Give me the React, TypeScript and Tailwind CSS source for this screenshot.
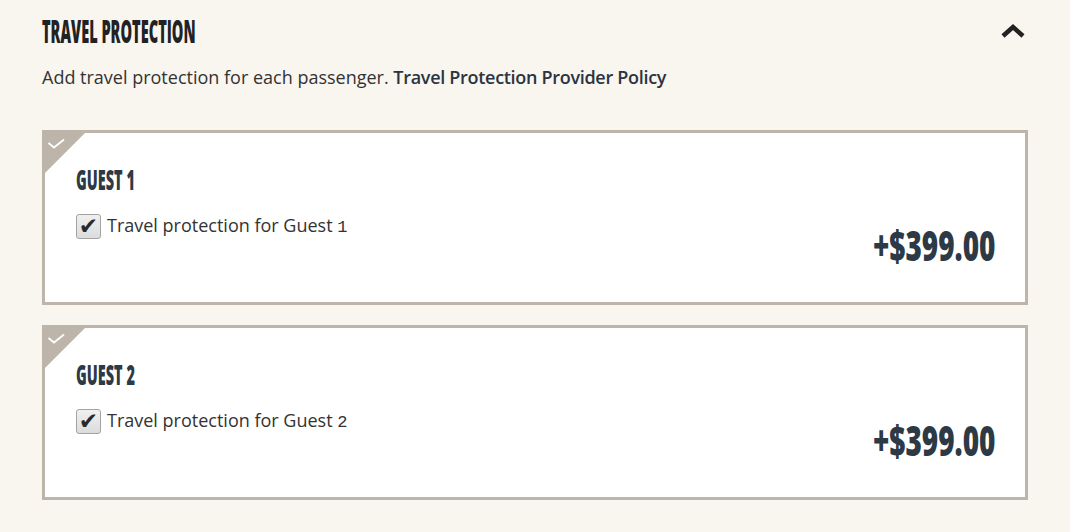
const guests = [
  { id: 1, price: "+$399.00" },
  { id: 2, price: "+$399.00" },
];

const condensed = "font-['Open_Sans',sans-serif] font-extrabold";

function GuestCard({ id, price }: { id: number; price: string }) {
  return (
    <div className="relative h-[175px] border-[3px] border-[#bdb5aa] bg-white">
      {/* corner flag */}
      <svg viewBox="0 0 40 40" className="absolute left-0 top-0 h-[40px] w-[40px]" aria-hidden>
        <path d="M0 0 H40 L0 40 Z" fill="#bdb5aa" />
        <path d="M3.5 10 L9 14.5 L19 6.5" fill="none" stroke="#fff" strokeWidth="1.8" />
      </svg>
      <div className="flex h-full items-start justify-between pl-[31px] pr-[30px] pt-[31px]">
        <div>
          <h3 className={`${condensed} origin-left scale-x-[0.5] text-[29px] leading-none text-[#2d3a46]`}>
            GUEST {id}
          </h3>
          <label className="mt-[19px] flex items-center gap-[6px] text-[18px] text-[#333]">
            <span className="flex h-[25px] w-[25px] items-center justify-center overflow-hidden rounded-[3px] border border-[#a3a3a3] bg-gradient-to-b from-[#f0f0f0] to-[#dcdcdc]">
              <span className="font-['DejaVu_Sans',sans-serif] text-[23px] leading-none text-[#2a2a2a]">✔</span>
            </span>
            <span>
              Travel protection for Guest{" "}
              <span className="font-['Liberation_Mono',monospace] text-[17px]">{id}</span>
            </span>
          </label>
        </div>
        <div className={`${condensed} mt-[59px] origin-right scale-x-[0.65] text-[43px] leading-none text-[#2d3a46]`}>
          {price}
        </div>
      </div>
    </div>
  );
}

export default function App() {
  return (
    <div className="min-h-[532px] w-[1070px] bg-[#f9f5ef] px-[42px] pt-[15px] font-['Open_Sans',sans-serif]">
      <div className="flex items-center justify-between">
        <h2 className={`${condensed} origin-left scale-x-[0.47] text-[31px] leading-[32px] text-[#222]`}>
          TRAVEL PROTECTION
        </h2>
        <svg viewBox="0 0 26 16" className="mr-[2px] h-[16px] w-[26px]" aria-hidden>
          <path d="M3 13 L13 4 L23 13" fill="none" stroke="#222" strokeWidth="4.5" />
        </svg>
      </div>
      <p className="mt-[17px] text-[18px] leading-[26px] text-[#333]">
        Add travel protection for each passenger.{" "}
        <a className="font-semibold tracking-[-0.3px] text-[#2b3440]">Travel Protection Provider Policy</a>
      </p>
      <div className="mt-[40px] flex flex-col gap-[20px]">
        {guests.map((g) => (
          <GuestCard key={g.id} {...g} />
        ))}
      </div>
    </div>
  );
}
